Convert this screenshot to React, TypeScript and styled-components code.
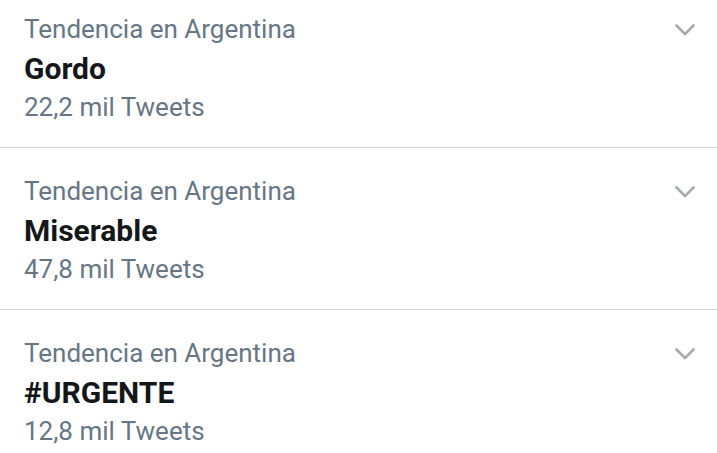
import styled, { createGlobalStyle } from "styled-components";

const GlobalStyle = createGlobalStyle`
  body {
    margin: 0;
    background: #ffffff;
    font-family: Roboto, "Liberation Sans", sans-serif;
  }
`;

const trends = [
  { id: "gordo", place: "Tendencia en Argentina", name: "Gordo", count: "22,2 mil Tweets" },
  { id: "miserable", place: "Tendencia en Argentina", name: "Miserable", count: "47,8 mil Tweets" },
  { id: "urgente", place: "Tendencia en Argentina", name: "#URGENTE", count: "12,8 mil Tweets" },
];

const Chevron = () => (
  <svg width="20" height="12" viewBox="0 0 20 12" fill="none">
    <path d="M1.5 1.5 L10 10 L18.5 1.5" stroke="#a4aab0" strokeWidth="2.6" strokeLinecap="round" strokeLinejoin="round" />
  </svg>
);

const App = () => {
  return (
    <>
      <GlobalStyle />
      <List>
        {trends.map((trend) => (
          <TrendRow key={trend.id}>
            <TopLine>
              <Place>{trend.place}</Place>
              <MenuButton>
                <Chevron />
              </MenuButton>
            </TopLine>
            <TrendName>{trend.name}</TrendName>
            <TweetCount>{trend.count}</TweetCount>
          </TrendRow>
        ))}
      </List>
    </>
  );
};

const List = styled.div`
  width: 717px;
  display: flex;
  flex-direction: column;
`;

const TrendRow = styled.div`
  display: flex;
  flex-direction: column;
  padding: 24px 21px 20px 24px;
  border-bottom: 1px solid #cfd3d6;

  &:first-child {
    padding-top: 10px;
  }
`;

const TopLine = styled.div`
  display: flex;
  align-items: center;
  justify-content: space-between;
  height: 39px;
`;

const Place = styled.div`
  font-size: 26px;
  line-height: 39px;
  color: #657786;
`;

const MenuButton = styled.div`
  display: flex;
  align-items: center;
  justify-content: center;
  width: 22px;
  height: 39px;
`;

const TrendName = styled.div`
  font-size: 30px;
  font-weight: 700;
  line-height: 39px;
  color: #14171a;
`;

const TweetCount = styled.div`
  font-size: 26px;
  line-height: 39px;
  color: #657786;
`;

export default App;
